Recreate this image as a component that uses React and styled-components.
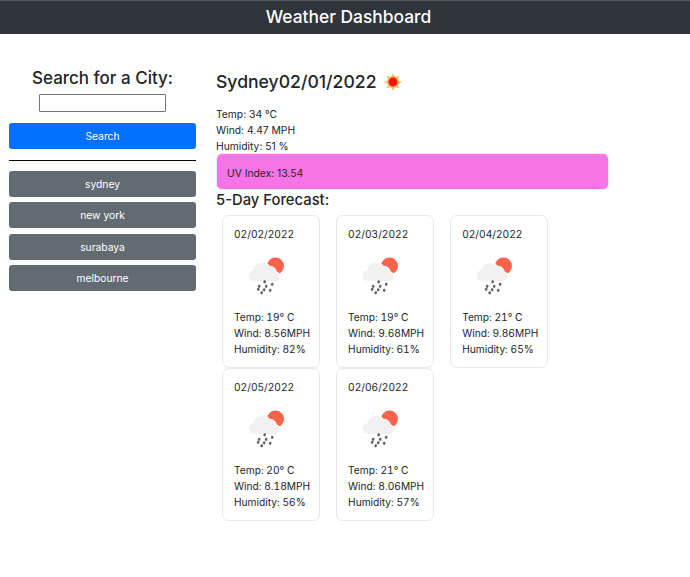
import React from "react";
import styled, { createGlobalStyle } from "styled-components";

const GlobalStyle = createGlobalStyle`
  * { box-sizing: border-box; }
  body {
    margin: 0;
    background: #fff;
    color: #212529;
    font-family: Inter, "Liberation Sans", sans-serif;
    font-size: 10.3px;
    line-height: 16px;
  }
`;

const Header = styled.header`
  height: 34px;
  padding-left: 7px;
  background: #30343b;
  border-top: 1px solid #55585d;
  color: #fff;
  font-size: 17.4px;
  font-weight: 500;
  line-height: 31px;
  text-align: center;
`;

const Page = styled.div`
  display: flex;
  align-items: flex-start;
`;

const Sidebar = styled.aside`
  width: 187px;
  margin: 32px 0 0 9px;
  display: flex;
  flex-direction: column;
  align-items: center;
`;

const SearchTitle = styled.h2`
  margin: 0;
  font-size: 17px;
  line-height: 25px;
  font-weight: 500;
`;

const SearchInput = styled.input`
  width: 127px;
  height: 18px;
  margin: 3px 0 11px;
  padding: 0;
  background: #fff;
  border: 1px solid #767676;
  border-radius: 1px;
`;

const Button = styled.button`
  display: block;
  width: 100%;
  height: 26px;
  margin-bottom: ${({ $primary }) => ($primary ? "0" : "5.4px")};
  padding: 0;
  border: 0;
  border-radius: 3px;
  background: ${({ $primary }) => ($primary ? "#0070ff" : "#626b72")};
  color: #fff;
  font-family: inherit;
  font-size: 10.3px;
  font-weight: 400;
`;

const Rule = styled.hr`
  width: 100%;
  height: 1px;
  margin: 11px 0 10px;
  border: 0;
  background: #000;
`;

const Main = styled.main`
  width: 393px;
  margin: 35px 0 0 20px;
`;

const CityTitle = styled.h1`
  display: flex;
  align-items: center;
  margin: 0 0 12px;
  height: 25px;
  font-size: 17.6px;
  line-height: 25px;
  font-weight: 500;
`;

const SunIcon = styled.svg`
  width: 20px;
  height: 20px;
  margin-left: 6.5px;
`;

const UvBar = styled.div`
  height: 37px;
  margin-top: -1px;
  padding: 11px 10px;
  background: #f774e6;
  border: 1px solid #eee;
  border-radius: 6px;
`;

const ForecastTitle = styled.h2`
  margin: 0;
  height: 25px;
  font-size: 14.8px;
  line-height: 20px;
  font-weight: 500;
`;

const Cards = styled.div`
  display: flex;
  flex-wrap: wrap;
`;

const Card = styled.div`
  margin: 0 10px 0 6px;
  padding: 10px 9px 10px 11px;
  border: 1px solid #e8e8e8;
  border-radius: 7px;
  white-space: nowrap;
  font-size: 10.2px;
  font-variant-numeric: tabular-nums;
`;

const CardDate = styled.div`
  margin-bottom: 7px;
`;

const IconWrap = styled.div`
  display: flex;
  justify-content: center;
  height: 50px;
  margin-bottom: 10px;
`;

const Sun = () => {
  const rays = [0, 45, 90, 135, 180, 225, 270, 315];
  return (
    <SunIcon viewBox="0 0 20 20">
      {rays.map((r) => (
        <polygon key={r} points="8.6,4.5 11.4,4.5 10,1" fill="#fbb565" transform={`rotate(${r} 10 10)`} />
      ))}
      <circle cx="10" cy="10" r="6" fill="#fbb04a" />
      <circle cx="10" cy="10" r="4.4" fill="#f5140f" />
    </SunIcon>
  );
};

const drops = [
  [18, 31], [25.5, 33.5], [12.5, 35.5], [19.5, 35.5],
  [11.5, 38.5], [17.5, 39], [23.5, 39.5], [15, 42],
];

const RainCloud = () => (
  <svg width="50" height="50" viewBox="1 0 50 50">
    <circle cx="29.5" cy="17" r="8.5" fill="#f9634a" />
    <path
      d="M8 32.5a6 6 0 0 1-1-11.9A9 9 0 0 1 23 17a7.5 7.5 0 0 1 7.5 6a5 5 0 0 1 0 9.5z"
      fill="#f1f1f1"
      stroke="#fff"
      strokeWidth="1.2"
    />
    <g fill="#5f6368">
      {drops.map(([x, y]) => (
        <rect key={`${x}-${y}`} x={x} y={y} width="2.4" height="3" rx=".8" transform={`rotate(18 ${x} ${y})`} />
      ))}
    </g>
  </svg>
);

const cities = ["sydney", "new york", "surabaya", "melbourne"];

const forecast = [
  { date: "02/02/2022", temp: 19, wind: "8.56", humidity: 82 },
  { date: "02/03/2022", temp: 19, wind: "9.68", humidity: 61 },
  { date: "02/04/2022", temp: 21, wind: "9.86", humidity: 65 },
  { date: "02/05/2022", temp: 20, wind: "8.18", humidity: 56 },
  { date: "02/06/2022", temp: 21, wind: "8.06", humidity: 57 },
];

export default function App() {
  return (
    <>
      <GlobalStyle />
      <Header>Weather Dashboard</Header>
      <Page>
        <Sidebar>
          <SearchTitle>Search for a City:</SearchTitle>
          <SearchInput type="text" />
          <Button $primary>Search</Button>
          <Rule />
          {cities.map((city) => (
            <Button key={city}>{city}</Button>
          ))}
        </Sidebar>
        <Main>
          <CityTitle>
            Sydney02/01/2022
            <Sun />
          </CityTitle>
          <div>Temp: 34 °C</div>
          <div>Wind: 4.47 MPH</div>
          <div>Humidity: 51 %</div>
          <UvBar>UV Index: 13.54</UvBar>
          <ForecastTitle>5-Day Forecast:</ForecastTitle>
          <Cards>
            {forecast.map((day) => (
              <Card key={day.date}>
                <CardDate>{day.date}</CardDate>
                <IconWrap>
                  <RainCloud />
                </IconWrap>
                <div>Temp: {day.temp}° C</div>
                <div>Wind: {day.wind}MPH</div>
                <div>Humidity: {day.humidity}%</div>
              </Card>
            ))}
          </Cards>
        </Main>
      </Page>
    </>
  );
}
